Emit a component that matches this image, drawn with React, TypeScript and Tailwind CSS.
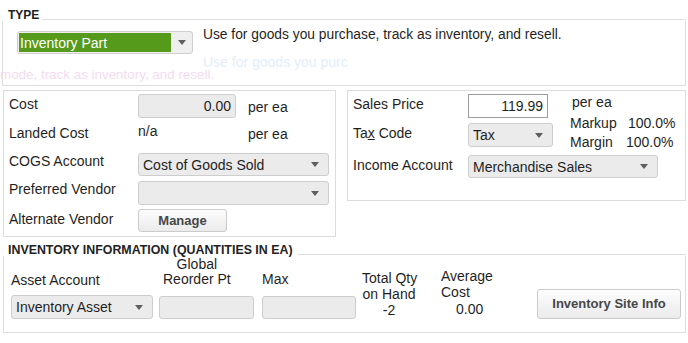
import React from 'react';

// Small dark triangle used by every dropdown
function Arrow() {
  return (
    <svg width="8" height="5" viewBox="0 0 8 5" className="shrink-0">
      <path d="M0 0h8L4 5z" fill="#5e5e5e" />
    </svg>
  );
}

function Select({ value, className }: { value?: string; className: string }) {
  return (
    <div
      className={`flex items-center justify-between rounded-[3px] border border-[#cdcdcd] bg-[#ebebeb] pl-[4px] pr-[9px] ${className}`}
    >
      <span className="truncate">{value}</span>
      <Arrow />
    </div>
  );
}

function GrayInput({ value, className }: { value?: string; className: string }) {
  return (
    <div
      className={`rounded-[3px] border border-[#cdcdcd] bg-[#ebebeb] pr-[4px] text-right leading-[22px] ${className}`}
    >
      {value}
    </div>
  );
}

function Button({ label, className }: { label: string; className: string }) {
  return (
    <div
      className={`flex items-center justify-center rounded-[3px] border border-[#cbcbcb] bg-linear-to-b from-[#fdfdfd] to-[#ebebeb] text-[13px] font-bold text-[#474747] ${className}`}
    >
      {label}
    </div>
  );
}

export default function App() {
  return (
    <div className="relative h-[343px] w-[688px] overflow-hidden bg-white font-['Liberation_Sans',Arial,sans-serif] text-[14px] leading-[16px] text-[#1f1f1f]">
      {/* TYPE */}
      <div className="mx-[2px] mt-[8px] flex h-[13px] items-end">
        <span className="pl-[6px] pr-[3px] text-[12px] font-bold leading-[12px] text-[#222]">TYPE</span>
        <div className="mb-px h-px flex-1 bg-[#dedede]" />
      </div>
      <div className="mx-[2px] flex h-[65px] items-start border-x border-b border-[#dedede] pl-[14px] pt-[6px]">
        <div className="mt-[4px] flex h-[23px] w-[176px] rounded-[3px] border border-[#cfcfcf] bg-[#efefef]">
          <div className="m-px flex flex-1 items-center bg-[#569a1c] pl-px text-white">Inventory Part</div>
          <div className="flex w-[20px] items-center justify-center">
            <Arrow />
          </div>
        </div>
        <div className="ml-[10px] text-[13.8px]">Use for goods you purchase, track as inventory, and resell.</div>
      </div>

      {/* faint ghost text left in the capture */}
      <div className="absolute left-[203px] top-[57px] leading-[11px] text-[#e3eef9]">Use for goods you purc</div>
      <div className="absolute left-0 top-[69px] text-[13.4px] leading-[12px] text-[#f4dcef]">
        mode, track as inventory, and resell.
      </div>

      {/* cost / sales */}
      <div className="mt-[4px] flex items-start">
        <div className="ml-[3px] h-[147px] w-[333px] border border-[#dcdcdc]">
          <div className="mt-[3px] flex h-[24px]">
            <div className="w-[134px] pl-[5px] pt-[2px]">Cost</div>
            <GrayInput value="0.00" className="h-[24px] w-[98px]" />
            <div className="ml-[12px] pt-[5px]">per ea</div>
          </div>
          <div className="flex h-[35px]">
            <div className="w-[134px] pl-[5px] pt-[7px]">Landed Cost</div>
            <div className="w-[98px] pt-[5px]">n/a</div>
            <div className="ml-[12px] pt-[8px]">per ea</div>
          </div>
          <div className="flex h-[23px]">
            <div className="w-[134px] pl-[5px]">COGS Account</div>
            <Select value="Cost of Goods Sold" className="h-[23px] w-[191px]" />
          </div>
          <div className="mt-[5px] flex h-[24px]">
            <div className="w-[134px] pl-[5px]">Preferred Vendor</div>
            <Select className="h-[24px] w-[191px]" />
          </div>
          <div className="mt-[4px] flex h-[23px]">
            <div className="w-[134px] pl-[5px] pt-[2px]">Alternate Vendor</div>
            <Button label="Manage" className="h-[23px] w-[89px]" />
          </div>
        </div>

        <div className="ml-[11px] h-[111px] w-[339px] border border-[#dcdcdc]">
          <div className="flex h-[59px]">
            <div className="w-[120px] pl-[5px]">
              <div className="mt-[5px]">Sales Price</div>
              <div className="mt-[13px]">
                Ta<span className="underline">x</span> Code
              </div>
            </div>
            <div className="w-[85px]">
              <div className="mt-[3px] h-[24px] w-[80px] border border-[#9c9c9c] bg-white pr-[4px] text-right leading-[22px]">
                119.99
              </div>
              <Select value="Tax" className="mt-[5px] h-[24px] w-[85px]" />
            </div>
            <div className="ml-[17px]">
              <div className="ml-[2px] mt-[3px]">per ea</div>
              <div className="mt-[5px] flex">
                <span className="w-[58px]">Markup</span>
                <span>100.0%</span>
              </div>
              <div className="mt-[3px] flex">
                <span className="w-[56px]">Margin</span>
                <span>100.0%</span>
              </div>
            </div>
          </div>
          <div className="mt-[5px] flex h-[23px]">
            <div className="w-[120px] pl-[5px] pt-[2px]">Income Account</div>
            <Select value="Merchandise Sales" className="h-[23px] w-[190px]" />
          </div>
        </div>
      </div>

      {/* inventory information */}
      <div className="ml-[3px] mt-[8px] flex h-[11px] w-[683px] items-end">
        <span className="pl-[5px] pr-[5px] text-[12.4px] font-bold leading-[11px] text-[#222]">
          INVENTORY INFORMATION (QUANTITIES IN EA)
        </span>
        <div className="mb-px h-px flex-1 bg-[#dedede]" />
      </div>
      <div className="ml-[3px] flex h-[77px] w-[683px] items-start border-x border-b border-[#dedede]">
        <div className="ml-[7px] w-[142px]">
          <div className="mt-[16px]">Asset Account</div>
          <Select value="Inventory Asset" className="mt-[7px] h-[24px] w-[142px]" />
        </div>
        <div className="ml-[6px] w-[95px]">
          <div className="mt-px inline-block pl-[4px] text-center leading-[15px]">
            Global
            <br />
            Reorder Pt
          </div>
          <GrayInput className="mt-[9px] h-[23px] w-[95px]" />
        </div>
        <div className="ml-[8px] w-[94px]">
          <div className="mt-[15px]">Max</div>
          <GrayInput className="mt-[9px] h-[23px] w-[94px]" />
        </div>
        <div className="ml-[6px] mt-[14px] w-[54px] whitespace-nowrap text-center">
          Total Qty
          <br />
          on Hand
          <br />
          -2
        </div>
        <div className="ml-[25px] mt-[12px] whitespace-nowrap">
          <div>Average</div>
          <div>Cost</div>
          <div className="pl-[15px] pt-px">0.00</div>
        </div>
        <Button label="Inventory Site Info" className="ml-auto mr-[4px] mt-[33px] h-[30px] w-[144px]" />
      </div>
    </div>
  );
}
